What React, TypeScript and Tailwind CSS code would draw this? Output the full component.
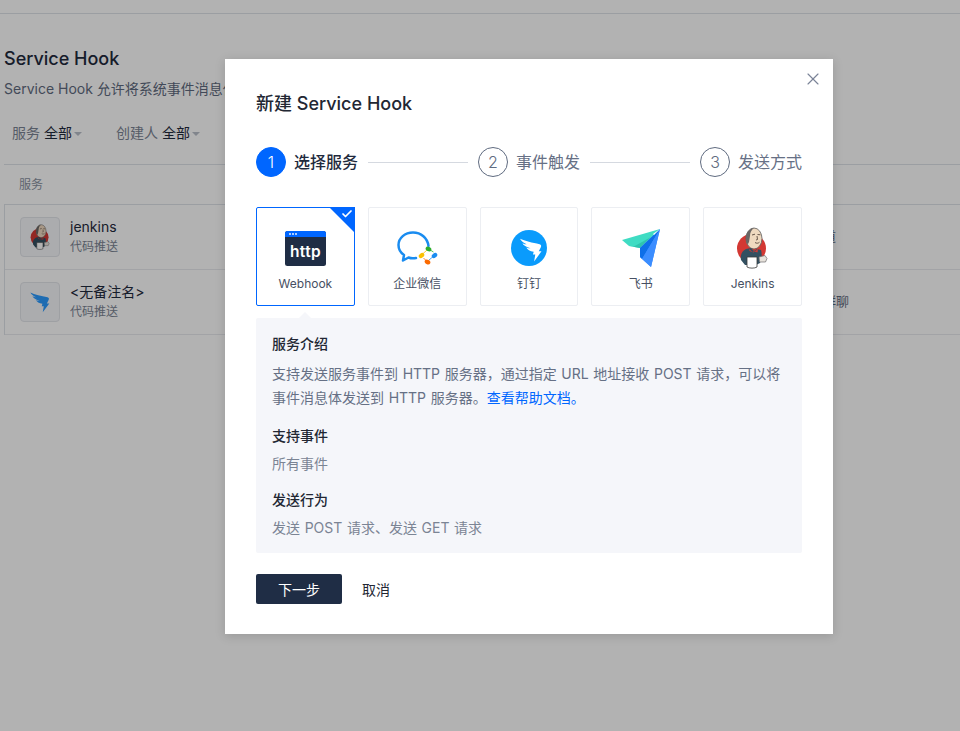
import React from "react";
import { Check, X } from "lucide-react";

function JenkinsIcon({ className }: { className?: string }) {
  return (
    <svg viewBox="0 0 34 42" className={className}>
      <ellipse cx="15.500" cy="21.500" rx="14.500" ry="14.500" fill="#d33833" />
      <ellipse cx="18" cy="11.500" rx="8" ry="10.500" fill="#efd9c0" stroke="#5c5c5c" strokeWidth="0.800" />
      <path d="M10 14C9 7 12 2 18 1c-3 2-4 5-4 8l-1 6-1 2c-1 0-2-1-2-3z" fill="#6a6664" />
      <path d="M5 33c-1-5 1-9 5-11l5-1 3 3 3-2 4 1c1 3 1 9-1 13l-4 2H9z" fill="#335061" />
      <path d="M13 22l3.500 3 3.500-1.500 2-2-.5 4-3-1-1 1-4-1.500z" fill="#d33833" />
      <path d="M11 30h10v10c-2 1.500-8 1.500-10 0z" fill="#fff" stroke="#3a3a3a" strokeWidth="0.800" />
      <path d="M23 30l6-1.500 2 3-1.500 3.500-6 0z" fill="#e8e3dc" stroke="#6d6b6d" strokeWidth="0.700" />
      <path d="M16 8l3-.800M21.500 7.500l3 .300M19 15.500c1.500 1 3 1 4.500-.300M21 9l.500 3.500-1.500.500" stroke="#5a4a3f" strokeWidth="0.900" fill="none" />
    </svg>
  );
}

function DingWing({ fill }: { fill: string }) {
  return (
    <path
      d="M2 3c6 3 16 5 25 7 2 .5 2.500 2 1.500 4l-2.500 5h3.500L20 32l1.500-9h-3l1-3.500c-5-.500-8-3-9.500-5.500 2 1 4 1.200 5.500 1.200C10 13.500 6 11 5 8.500 7 9.500 9 10 10.500 10 7 8.500 3.500 6 2 3z"
      fill={fill}
    />
  );
}

function ServiceCard({ label, active, children }: { label: string; active?: boolean; children: React.ReactNode }) {
  return (
    <div
      className={`relative flex h-[99px] flex-col items-center rounded-[2px] border pt-[18px] ${
        active ? "border-[#0066ff]" : "border-[#eceef2]"
      }`}
    >
      {active && (
        <div className="absolute -top-px -right-px h-0 w-0 border-[13px] border-t-[#0066ff] border-r-[#0066ff] border-b-transparent border-l-transparent">
          <Check className="absolute -top-[12px] -left-[1px] h-[12px] w-[12px] text-white" strokeWidth={3.5} />
        </div>
      )}
      <div className="flex h-[44px] w-full items-center justify-center">{children}</div>
      <div className="mt-[4px] text-[12px] leading-[20px] text-[#475063]">{label}</div>
    </div>
  );
}

function Step({ n, label, active }: { n: number; label: string; active?: boolean }) {
  return (
    <div className="flex shrink-0 items-center">
      <div
        className={`flex h-[30px] w-[30px] items-center justify-center rounded-full border text-[16px] font-light ${
          active ? "border-[#0066ff] bg-[#0066ff] text-white" : "border-[#5f6b80] text-[#5f6b80]"
        }`}
      >
        {n}
      </div>
      <div className={`ml-[8px] text-[16px] leading-[24px] ${active ? "font-medium text-[#1f2a3d]" : "text-[#667085]"}`}>
        {label}
      </div>
    </div>
  );
}

function BackgroundRow({ icon, name, right, rightClass }: { icon: React.ReactNode; name: string; right: string; rightClass: string }) {
  return (
    <div className="flex h-[65px] items-center border-b border-[#e8eaee] pl-[15px]">
      <div className="flex h-[40px] w-[40px] items-center justify-center rounded-[4px] border border-[#e2e5ea] bg-[#f5f6fa]">
        {icon}
      </div>
      <div className="mb-[2px] ml-[10px]">
        <div className="text-[14px] leading-[20px] text-[#1f2a3d]">{name}</div>
        <div className="mt-px text-[12px] leading-[18px] text-[#7b8494]">代码推送</div>
      </div>
      <div className={`ml-auto text-[13px] text-[#5f6b80] ${rightClass}`}>{right}</div>
    </div>
  );
}

export default function App() {
  return (
    <div className="relative h-[731px] w-[960px] overflow-hidden bg-white font-['Inter','Noto_Sans_CJK_SC',sans-serif]">
      {/* page behind the dialog */}
      <div className="h-[14px] border-b border-[#dfe2e8]" />
      <div className="pl-[4px]">
        <h1 className="mt-[33px] text-[18px] leading-[24px] font-medium text-[#1f2a3d]">Service Hook</h1>
        <p className="mt-[8px] text-[14px] leading-[20px] whitespace-nowrap text-[#5f6b80]">
          Service Hook 允许将系统事件消息仅发送到外部服务
        </p>
        <div className="mt-[24px] flex h-[20px] items-center pl-[8px] text-[14px] leading-[20px]">
          <span className="text-[#7b8494]">服务</span>
          <span className="ml-[4px] text-[#1f2a3d]">全部</span>
          <span className="mt-[1px] ml-[2px] h-0 w-0 border-x-[4px] border-t-[4px] border-x-transparent border-t-[#b9bfc9]" />
          <span className="ml-[34px] text-[#7b8494]">创建人</span>
          <span className="ml-[4px] text-[#1f2a3d]">全部</span>
          <span className="mt-[1px] ml-[2px] h-0 w-0 border-x-[4px] border-t-[4px] border-x-transparent border-t-[#b9bfc9]" />
        </div>
        <div className="mt-[21px] flex h-[40px] items-center border-t border-[#dfe2e8] pl-[15px] text-[12px] text-[#8a92a1]">
          服务
        </div>
        <div className="border-t border-l border-[#dfe2e8]">
          <BackgroundRow
            icon={<JenkinsIcon className="h-[26px] w-[21px]" />}
            name="jenkins"
            right="代码托管通道"
            rightClass="mr-[124px]"
          />
          <BackgroundRow
            icon={
              <svg viewBox="0 0 32 34" className="h-[24px] w-[22px]">
                <DingWing fill="#2b9bff" />
              </svg>
            }
            name="<无备注名>"
            right="通知钉钉群聊"
            rightClass="mr-[111px]"
          />
        </div>
      </div>

      {/* overlay and dialog */}
      <div className="absolute inset-0 bg-black/30">
        <div className="relative mt-[59px] ml-[225px] h-[575px] w-[608px] bg-white px-[31px] pt-[33px] shadow-[0_2px_10px_rgba(0,0,0,0.15)]">
          <X className="absolute top-[10px] right-[10px] h-[20px] w-[20px] text-[#7b8498]" strokeWidth={1.4} />
          <h2 className="text-[18px] leading-[24px] font-medium text-[#222733]">新建 Service Hook</h2>

          <div className="mt-[31px] flex h-[30px] items-center">
            <Step n={1} label="选择服务" active />
            <div className="mx-[10px] h-px flex-1 bg-[#d5d9e0]" />
            <Step n={2} label="事件触发" />
            <div className="mx-[10px] h-px flex-1 bg-[#d5d9e0]" />
            <Step n={3} label="发送方式" />
          </div>

          <div className="mt-[30px] grid grid-cols-5 gap-[13px]">
            <ServiceCard label="Webhook" active>
              <svg viewBox="0 0 41 35" className="h-[35px] w-[41px]">
                <rect x="0" y="0" width="41" height="35" rx="2.500" fill="#1f2d45" />
                <path d="M0 6V2.500A2.500 2.500 0 0 1 2.500 0h36A2.500 2.500 0 0 1 41 2.500V6z" fill="#0066ff" />
                <circle cx="5" cy="3" r="0.900" fill="#fff" />
                <circle cx="8" cy="3" r="0.900" fill="#fff" />
                <circle cx="11" cy="3" r="0.900" fill="#fff" />
                <text x="20.500" y="25.500" textAnchor="middle" fill="#fff" fontSize="15.500" fontWeight="600" fontFamily="Inter" letterSpacing="0.300">
                  http
                </text>
              </svg>
            </ServiceCard>
            <ServiceCard label="企业微信">
              <svg viewBox="0 0 42 36" className="h-[36px] w-[42px]">
                <path
                  d="M32.500 16C31.500 8 25 2.500 17 2.500 9 2.500 2.500 8 2.500 15c0 4.500 2.500 8 5.500 10l-1 5.500 5.500-3c2.500 1 5 1 7.500.500"
                  fill="none"
                  stroke="#1a8cf0"
                  strokeWidth="2.500"
                  strokeLinecap="round"
                  strokeLinejoin="round"
                />
                <g stroke="#fbc000" strokeWidth="0.800"><line x1="25.500" y1="25" x2="31" y2="20" /></g>
                <ellipse cx="25.500" cy="25.500" rx="3" ry="2.200" fill="#fbc000" transform="rotate(-35 25.500 25.500)" />
                <g stroke="#2dae2d" strokeWidth="0.800"><line x1="32.500" y1="19" x2="37.500" y2="22" /></g>
                <ellipse cx="32.500" cy="19" rx="3" ry="2.200" fill="#2dae2d" transform="rotate(25 32.500 19)" />
                <g stroke="#1a8cf0" strokeWidth="0.800"><line x1="39" y1="25" x2="33" y2="30" /></g>
                <ellipse cx="38.500" cy="25.500" rx="3" ry="2.200" fill="#1a8cf0" transform="rotate(-35 38.500 25.500)" />
                <g stroke="#fb6a00" strokeWidth="0.800"><line x1="31.500" y1="32" x2="27.500" y2="28" /></g>
                <ellipse cx="31.500" cy="32" rx="3" ry="2.200" fill="#fb6a00" transform="rotate(30 31.500 32)" />
              </svg>
            </ServiceCard>
            <ServiceCard label="钉钉">
              <svg viewBox="0 0 36 36" className="h-[36px] w-[36px]">
                <circle cx="18" cy="18" r="18" fill="#0a9bfc" />
                <g transform="translate(7.500 6.500) scale(0.78)">
                  <DingWing fill="#fff" />
                </g>
              </svg>
            </ServiceCard>
            <ServiceCard label="飞书">
              <svg viewBox="0 0 40 40" className="h-[40px] w-[40px]">
                <path d="M1 12L39 1 19 20 8 18z" fill="#3fdcc3" />
                <path d="M8 18L19 20 30 9 12 19z" fill="#2fc4ae" />
                <path d="M39 1L30 39 19 29V20z" fill="#3b8dff" />
                <path d="M39 1L19 20v9l2 2z" fill="#0e6fe8" />
                <path d="M39 1L30 39 21 31z" fill="#3b8dff" />
                <path d="M39 1L33 7l-1-1z" fill="#fff" />
              </svg>
            </ServiceCard>
            <ServiceCard label="Jenkins">
              <JenkinsIcon className="h-[42px] w-[34px]" />
            </ServiceCard>
          </div>

          <div className="relative mt-[12px] h-[235px] rounded-[2px] bg-[#f5f6fa] px-[16px] pt-[16px]">
            <div className="absolute -top-[6px] left-[43px] h-0 w-0 border-x-[6px] border-b-[6px] border-x-transparent border-b-[#f5f6fa]" />
            <div className="text-[14px] leading-[20px] font-medium text-[#222733]">服务介绍</div>
            <p className="mt-[8px] text-[14px] leading-[24px] text-[#667085] [word-spacing:0.7px]">
              支持发送服务事件到 HTTP 服务器，通过指定 URL 地址接收 POST 请求，可以将事件消息体发送到 HTTP 服务器。
              <span className="text-[#0066ff]">查看帮助文档。</span>
            </p>
            <div className="mt-[16px] text-[14px] leading-[20px] font-medium text-[#222733]">支持事件</div>
            <p className="mt-[6px] text-[14px] leading-[24px] text-[#7b8494]">所有事件</p>
            <div className="mt-[14px] text-[14px] leading-[20px] font-medium text-[#222733]">发送行为</div>
            <p className="mt-[6px] text-[14px] leading-[24px] text-[#7b8494] [word-spacing:0.7px]">发送 POST 请求、发送 GET 请求</p>
          </div>

          <div className="mt-[21px] flex items-center">
            <button className="h-[30px] w-[86px] rounded-[2px] bg-[#1f2d45] text-[14px] text-white">下一步</button>
            <button className="ml-[20px] text-[14px] text-[#222733]">取消</button>
          </div>
        </div>
      </div>
    </div>
  );
}
